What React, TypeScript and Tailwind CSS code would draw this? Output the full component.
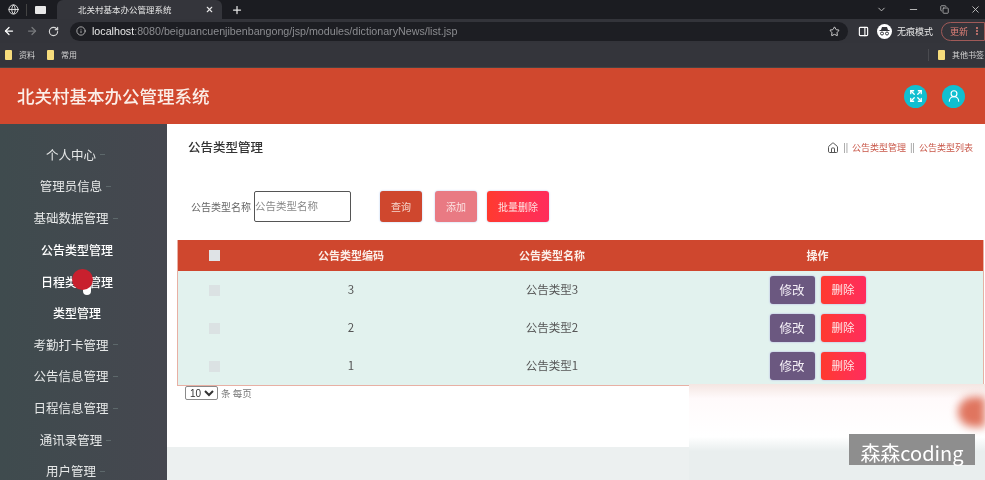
import { House, Expand, UserRound, ArrowLeft, ArrowRight, RotateCw, Info, Star, X, Plus, ChevronDown, Minus, Copy, Globe, PanelRight, MoreVertical } from "lucide-react";

const cjk = { fontFamily: '"Noto Sans CJK SC", "Liberation Sans", sans-serif' };

const menu: [string, boolean][] = [
  ["个人中心", true],
  ["管理员信息", true],
  ["基础数据管理", true],
  ["公告类型管理", false],
  ["日程类型管理", false],
  ["类型管理", false],
  ["考勤打卡管理", true],
  ["公告信息管理", true],
  ["日程信息管理", true],
  ["通讯录管理", true],
  ["用户管理", true],
];

function Mark({ className }: { className: string }) {
  return <div className={"w-[7px] h-[10px] rounded-[1px] bg-[#f6dc7c] " + className} />;
}

function Chrome() {
  return (
    <div className="h-[68px] shrink-0 flex flex-col border-b border-[#444]">
      <div className="h-[19px] bg-[#1b1c21] flex items-center text-[#e6e6e6]">
        <Globe size={11} className="ml-[8px]" />
        <div className="w-px h-3 bg-[#444] ml-[7px]" />
        <div className="w-[11px] h-[8px] bg-[#e8e8e8] ml-[8px] rounded-[1px]" />
        <div className="ml-[11px] w-[165px] h-[19px] bg-[#34353b] rounded-t-md flex items-center pl-[21px] pr-[8px] justify-between">
          <span className="text-[8.5px] leading-none">北关村基本办公管理系统</span>
          <X size={9} strokeWidth={3} />
        </div>
        <Plus size={12} strokeWidth={2.5} className="ml-[9px]" />
        <div className="ml-auto flex items-center gap-[21px] pr-[4px] text-[#c4c4c4]">
          <ChevronDown size={11} />
          <Minus size={11} />
          <Copy size={9} />
          <X size={11} />
        </div>
      </div>
      <div className="h-[24px] bg-[#33343a] flex items-center text-[#d8d8d8]">
        <ArrowLeft size={12} strokeWidth={2.5} className="ml-[3px] text-white" />
        <ArrowRight size={12} strokeWidth={2.5} className="ml-[11px] text-[#77787c]" />
        <RotateCw size={11} strokeWidth={2.5} className="ml-[10px]" />
        <div className="ml-[11px] w-[778px] h-[19px] bg-[#1d1e23] rounded-full flex items-center pl-[6px] pr-[8px]">
          <Info size={10} className="text-[#c0c0c0]" />
          <span className="ml-[6px] text-[10.7px] leading-none text-[#8b8c90]" style={{ fontFamily: '"Liberation Sans", sans-serif' }}>
            <span className="text-[#e8e8e8]">localhost</span>:8080/beiguancuenjibenbangong/jsp/modules/dictionaryNews/list.jsp
          </span>
          <Star size={11} className="ml-auto text-[#dcdcdc]" />
        </div>
        <PanelRight size={11} strokeWidth={2.5} className="ml-[10px] text-white" />
        <div className="ml-[8px] flex items-center gap-[5px]">
          <div className="w-[15px] h-[15px] rounded-full bg-white flex items-center justify-center">
            <svg width="11" height="10" viewBox="0 0 11 10" fill="none">
              <path d="M3 1 H8 L9 4 H2 Z" fill="#33343a" />
              <rect x="0.5" y="4" width="10" height="1" fill="#33343a" />
              <circle cx="3" cy="7.5" r="1.5" stroke="#33343a" />
              <circle cx="8" cy="7.5" r="1.5" stroke="#33343a" />
            </svg>
          </div>
          <span className="text-[9px] leading-none text-[#e8e8e8]">无痕模式</span>
        </div>
        <div className="ml-[8px] grow h-[19px] border border-[#a05a58] rounded-l-full flex items-center pl-[8px] gap-[4px] text-[#e08078]">
          <span className="text-[9px] leading-none">更新</span>
          <MoreVertical size={10} strokeWidth={3} />
        </div>
      </div>
      <div className="h-[24px] bg-[#34353b] flex items-center text-[8px] text-[#d4d4d4]">
        <Mark className="ml-[5px]" />
        <span className="ml-[7px]">资料</span>
        <Mark className="ml-[12px]" />
        <span className="ml-[7px]">常用</span>
        <div className="ml-auto w-px h-3 bg-[#4a4b50]" />
        <Mark className="ml-[9px]" />
        <span className="ml-[7px] mr-[1px] whitespace-nowrap">其他书签</span>
      </div>
    </div>
  );
}

function Header() {
  return (
    <div className="h-[56px] shrink-0 bg-[#d0482e] flex items-center pl-[17px] pr-[20px]">
      <span className="text-[17.5px] font-medium text-[#fbeee8]">北关村基本办公管理系统</span>
      <div className="ml-auto flex items-center gap-[15px]">
        <div className="w-[23px] h-[23px] rounded-full bg-[#10bfd0] flex items-center justify-center text-white">
          <Expand size={14} strokeWidth={2.2} />
        </div>
        <div className="w-[23px] h-[23px] rounded-full bg-[#10bfd0] flex items-center justify-center text-white">
          <UserRound size={14} strokeWidth={2} />
        </div>
      </div>
    </div>
  );
}

function Sidebar() {
  return (
    <div className="w-[167px] shrink-0 bg-gradient-to-r from-[#3f4b4e] to-[#45474f] pt-[15px] flex flex-col overflow-hidden">
      {menu.map(([label, caret]) => (
        <div key={label} className={"h-[31.7px] shrink-0 flex items-center justify-center leading-none " + (caret ? "text-[12.5px] pr-[16px]" : "text-[12px] pr-[13px]")}>
          <span className={caret ? "text-[#e6e8e8]" : "text-white font-medium"}>{label}</span>
          {caret && <span className="ml-[4px] w-[5px] h-px bg-[#5d686b]" />}
        </div>
      ))}
    </div>
  );
}

function Row({ code, name }: { code: string; name: string }) {
  return (
    <div className="h-[38px] grid grid-cols-[72px_202px_200px_1fr] items-center text-[11.5px] text-[#555]">
      <div className="flex justify-center"><div className="w-[11px] h-[11px] bg-[#dbe2e3]" /></div>
      <div className="text-center">{code}</div>
      <div className="text-center">{name}</div>
      <div className="flex justify-center gap-[6px]">
        <button className="w-[45px] h-[28px] rounded-[3px] bg-[#6b5880] text-[#f3eef5] text-[12.5px] shadow-[0_0_2px_#a9a5e0]">修改</button>
        <button className="w-[45px] h-[28px] rounded-[3px] bg-gradient-to-r from-[#ff3a2e] to-[#ff2c5c] text-[#fde8e8] text-[11.5px] shadow-[0_0_2px_#a9a5e0]">删除</button>
      </div>
    </div>
  );
}

function Main() {
  return (
    <div className="grow min-w-0 bg-[#ecf0f0] relative">
      <div className="h-[323px] bg-white pl-[11px] pr-[1px]">
        <div className="h-[47px] flex items-center pl-[10px] pr-[11px]">
          <span className="text-[12.5px] font-medium text-[#333]">公告类型管理</span>
          <div className="ml-auto flex items-center text-[9px] text-[#c9584a]">
            <House size={12} className="text-[#555]" />
            <span className="mx-[4px] text-[#777]">||</span>
            <span>公告类型管理</span>
            <span className="mx-[4px] text-[#777]">||</span>
            <span>公告类型列表</span>
          </div>
        </div>
        <div className="mt-[20px] h-[30px] flex items-center">
          <span className="ml-[13px] text-[10px] text-[#666]">公告类型名称</span>
          <div className="ml-[3px] w-[97px] h-[31px] border border-[#555] rounded-[2px] flex items-center text-[10.5px] text-[#888]">公告类型名称</div>
          <button className="ml-[29px] w-[42px] h-[31px] rounded-[3px] bg-[#cf472e] text-[#f6d8cf] text-[10px] shadow-[0_0_2px_#a9c5f0]">查询</button>
          <button className="ml-[13px] w-[42px] h-[31px] rounded-[3px] bg-[#e97a83] text-[#fbe2e2] text-[10px] shadow-[0_0_2px_#a9c5f0]">添加</button>
          <button className="ml-[10px] w-[62px] h-[31px] rounded-[3px] bg-gradient-to-r from-[#ff3a2e] to-[#ff2c5c] text-[#fde2e2] text-[10px] shadow-[0_0_2px_#a9c5f0]">批量删除</button>
        </div>
        <div className="mt-[19px] -ml-px w-[807px] border-x border-b border-[#e8b0a4] bg-[#e2f2ee]">
          <div className="h-[31px] bg-[#cf472e] grid grid-cols-[72px_202px_200px_1fr] items-center text-[11px] font-bold text-[#fbeee8]">
            <div className="flex justify-center"><div className="w-[11px] h-[11px] bg-[#dfe3e6]" /></div>
            <div className="text-center">公告类型编码</div>
            <div className="text-center">公告类型名称</div>
            <div className="text-center">操作</div>
          </div>
          <Row code="3" name="公告类型3" />
          <Row code="2" name="公告类型2" />
          <Row code="1" name="公告类型1" />
        </div>
        <div className="ml-[7px] flex items-center text-[9.5px] text-[#777]">
          <select className="w-[33px] h-[14px] border border-[#8a8a8a] rounded-[2px] bg-white text-[10px] text-[#333] leading-none" style={{ fontFamily: '"Liberation Sans", sans-serif' }} defaultValue="10">
            <option>10</option>
          </select>
          <span className="ml-[3px]">条 每页</span>
        </div>
      </div>
      <div className="absolute left-[522px] top-[260px] right-0 bottom-0 bg-[linear-gradient(to_bottom,#f4e6e2_0%,#fffafb_15%,#ffffff_55%,#e9eeee_70%,#e9eeee_100%)]" />
      <div className="absolute right-0 top-[273px] w-[27px] h-[30px] rounded-l-full bg-[#e0755f] blur-[4px]" />
      <div className="absolute left-[682px] top-[310px] w-[126px] h-[31px] bg-[#8e8e8e] text-white text-[20px] leading-[37px] text-center whitespace-nowrap">森森coding</div>
    </div>
  );
}

export default function App() {
  return (
    <div className="w-[985px] h-[480px] flex flex-col overflow-hidden relative blur-[0.35px]" style={cjk}>
      <Chrome />
      <Header />
      <div className="flex grow min-h-0">
        <Sidebar />
        <Main />
      </div>
      <div className="absolute left-[83px] top-[284px] w-[8px] h-[11px] rounded-full bg-white" />
      <div className="absolute left-[72px] top-[269px] w-[21px] h-[21px] rounded-full bg-[#c8202e]" />
    </div>
  );
}
